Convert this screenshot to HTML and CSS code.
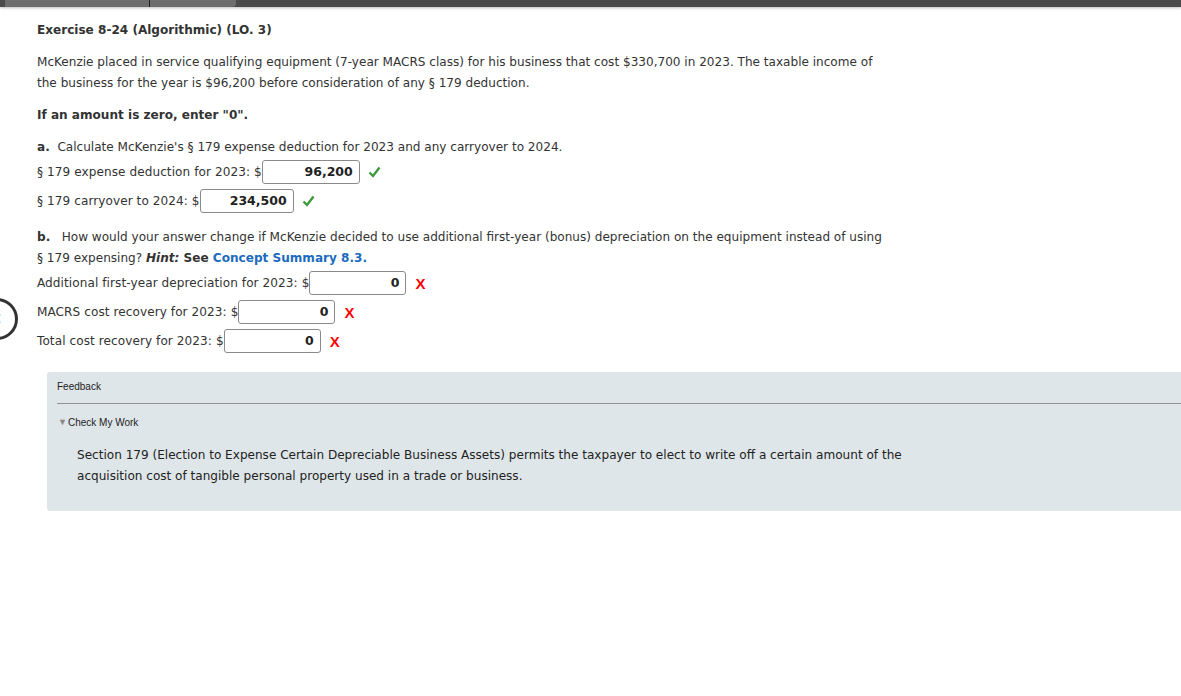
FILE: index.html
```html
<!DOCTYPE html>
<html lang="en">

<head>
  <meta charset="UTF-8">
  <meta name="viewport" content="width=device-width, initial-scale=1.0">
  <title>Exercise 8-24 (Algorithmic) (LO. 3)</title>
  <link rel="stylesheet" href="styles.css">
</head>

<body>
  <div class="topbar">
    <div class="tabs">
      <span class="tab tab-first"></span>
      <span class="tab tab-second"></span>
    </div>
  </div>

  <!-- carousel arrow peeking from the left edge -->
  <div class="prev-arrow">‹</div>

  <div class="content">
    <h2 class="title">Exercise 8-24 (Algorithmic) (LO. 3)</h2>
    <p class="text">McKenzie placed in service qualifying equipment (7-year MACRS class) for his business that cost $330,700 in 2023. The taxable income of<br>the business for the year is $96,200 before consideration of any § 179 deduction.</p>
    <p class="text strong">If an amount is zero, enter "0".</p>

    <p class="text"><b>a.</b>&nbsp; Calculate McKenzie's § 179 expense deduction for 2023 and any carryover to 2024.</p>
    <div class="row first">
      <label>§ 179 expense deduction for 2023: $</label>
      <span class="answer w98">96,200</span>
      <svg class="check" width="13" height="12" viewBox="0 0 13 12"><path d="M1.5 6.5 L5 10 L11.5 1.5" fill="none" stroke="#3d9a3a" stroke-width="2.4"/></svg>
    </div>
    <div class="row">
      <label>§ 179 carryover to 2024: $</label>
      <span class="answer w94">234,500</span>
      <svg class="check" width="13" height="12" viewBox="0 0 13 12"><path d="M1.5 6.5 L5 10 L11.5 1.5" fill="none" stroke="#3d9a3a" stroke-width="2.4"/></svg>
    </div>

    <p class="text part-b"><b>b.</b>&nbsp;&nbsp; How would your answer change if McKenzie decided to use additional first-year (bonus) depreciation on the equipment instead of using<br>§ 179 expensing? <b><i>Hint:</i> See <a href="javascript:;">Concept Summary 8.3.</a></b></p>
    <div class="row tight">
      <label>Additional first-year depreciation for 2023: $</label>
      <span class="answer w97">0</span>
      <span class="wrong">X</span>
    </div>
    <div class="row">
      <label>MACRS cost recovery for 2023: $</label>
      <span class="answer w97">0</span>
      <span class="wrong">X</span>
    </div>
    <div class="row">
      <label>Total cost recovery for 2023: $</label>
      <span class="answer w97">0</span>
      <span class="wrong">X</span>
    </div>

    <div class="feedback">
      <div class="fb-head">Feedback</div>
      <div class="fb-toggle"><span class="tri">▼</span>Check My Work</div>
      <p class="fb-text">Section 179 (Election to Expense Certain Depreciable Business Assets) permits the taxpayer to elect to write off a certain amount of the<br>acquisition cost of tangible personal property used in a trade or business.</p>
    </div>
  </div>
</body>

</html>
```

FILE: styles.css
```css
* {
  padding: 0;
  margin: 0;
  box-sizing: border-box;
}

body {
  font-family: "DejaVu Sans", Verdana, sans-serif;
  font-size: 12.07px;
  color: #333;
  background: #fff;
  overflow: hidden;
}

.topbar {
  height: 7px;
  background: #4b4b4b;
  box-shadow: 0 1px 3px rgba(0, 0, 0, .25);
}

.tabs {
  display: flex;
  height: 7px;
  padding-left: 5px;
}

.tab {
  display: block;
  height: 7px;
  background: #6e6e6e;
}

.tab-first {
  width: 145px;
  border-right: 1px solid #222;
}

.tab-second {
  width: 86px;
  border-bottom-right-radius: 4px;
}

.prev-arrow {
  position: absolute;
  left: -24px;
  top: 298px;
  width: 42px;
  height: 42px;
  border: 3px solid #333;
  border-radius: 50%;
  font: 22px/34px "DejaVu Sans", sans-serif;
  text-align: right;
  padding-right: 13px;
  color: #333;
}

.content {
  padding-left: 37px;
}

.title {
  font-size: 12.07px;
  line-height: 21px;
  font-weight: bold;
  margin-top: 13px;
}

.text {
  line-height: 21px;
  margin-top: 11px;
}

.strong {
  font-weight: bold;
}

.text a {
  color: #1d6bbf;
  text-decoration: none;
}

.part-b {
  margin-top: 14px;
}

.row {
  display: flex;
  align-items: center;
  height: 24px;
  margin-top: 5px;
}

.row label {
  letter-spacing: .08px;
}

.row.first {
  margin-top: 2px;
}

.row.tight {
  margin-top: 2px;
}

.answer {
  height: 24px;
  border: 1px solid #8a8a8a;
  border-radius: 3px;
  text-align: right;
  font-weight: bold;
  font-size: 12.5px;
  line-height: 22px;
  padding-right: 6px;
  color: #222;
  background: #fff;
}

.w98 {
  width: 98px;
}

.w94 {
  width: 94px;
}

.w97 {
  width: 97px;
}

.check {
  margin-left: 8px;
}

.wrong {
  margin-left: 9px;
  color: #f00;
  font: bold 15px "Liberation Sans", Arial, sans-serif;
}

.feedback {
  margin: 19px -20px 0 10px;
  height: 139px;
  background: #dfe6e9;
  border-radius: 3px 0 0 3px;
  padding: 8px 0 0 10px;
  font-family: "Liberation Sans", Arial, sans-serif;
  font-size: 10px;
  color: #222;
}

.fb-head {
  line-height: 14px;
  padding-bottom: 9px;
  border-bottom: 1px solid #8e9396;
}

.fb-toggle {
  margin-top: 11px;
  line-height: 14px;
}

.tri {
  color: #888;
  font-size: 9px;
  margin: 0 1px 0 1px;
  vertical-align: 1px;
}

.fb-text {
  font-family: "DejaVu Sans", Verdana, sans-serif;
  font-size: 12.07px;
  line-height: 21px;
  margin: 15px 0 0 20px;
  color: #222;
}
```
